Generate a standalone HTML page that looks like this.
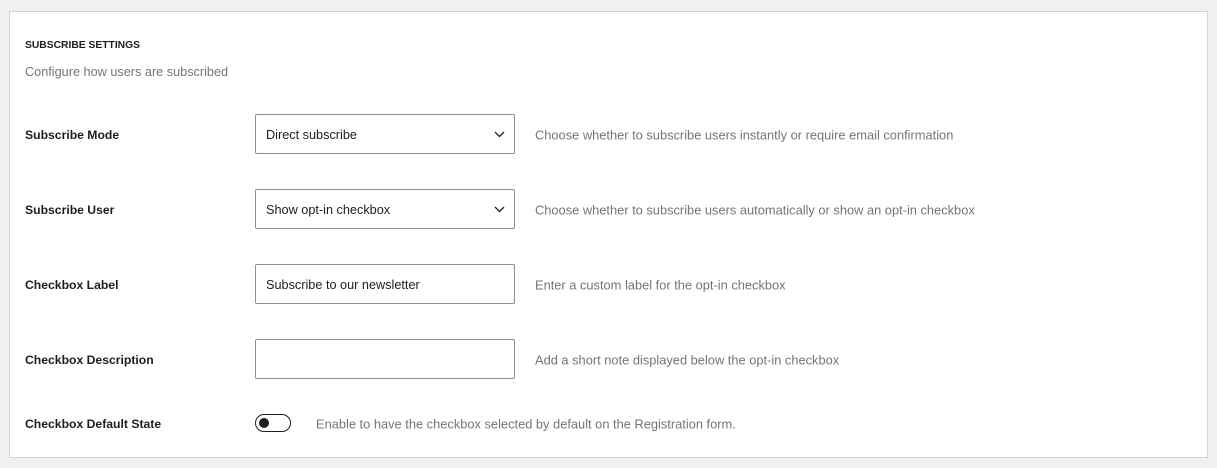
<!DOCTYPE html>
<html><head><style>
body{margin:0;background:#f0f0f0;font-family:"Liberation Sans",sans-serif;width:1217px;height:468px;overflow:hidden}
.card{position:absolute;left:9px;top:11px;width:1199px;height:447px;background:#fff;border:1px solid #d4d4d4;box-sizing:border-box}
.h{position:absolute;left:25px;top:40px;font-size:10.3px;font-weight:bold;color:#1e1e1e}
.sub{position:absolute;left:25px;top:65px;font-size:12.7px;color:#757575}
.lab{position:absolute;left:25px;font-size:12.2px;font-weight:bold;color:#1e1e1e;transform:translateY(-50%);margin-top:1px}
.inp{position:absolute;left:255px;width:260px;height:40px;border:1px solid #8c8f94;border-radius:2px;box-sizing:border-box;font-size:12.7px;color:#1e1e1e;padding-left:10px;line-height:40px;background:#fff}
.inp svg{position:absolute;right:9px;top:16px}
.d{position:absolute;left:535px;font-size:12.85px;color:#757575;transform:translateY(-50%);margin-top:1px}
.tg{position:absolute;left:255px;top:414px;width:36px;height:18px;border:1px solid #1e1e1e;border-radius:9px;box-sizing:border-box}
.tg::after{content:"";position:absolute;left:3px;top:3px;width:10px;height:10px;border-radius:50%;background:#1e1e1e}
</style></head><body>
<div class="card"></div>
<div class="h">SUBSCRIBE SETTINGS</div>
<div class="sub">Configure how users are subscribed</div>

<div class="lab" style="top:134px">Subscribe Mode</div>
<div class="inp" style="top:114px">Direct subscribe<svg width="11" height="7" viewBox="0 0 11 7"><path d="M1 1l4.5 4.5L10 1" fill="none" stroke="#1e1e1e" stroke-width="1.3"/></svg></div>
<div class="d" style="top:134px">Choose whether to subscribe users instantly or require email confirmation</div>

<div class="lab" style="top:209px">Subscribe User</div>
<div class="inp" style="top:189px">Show opt-in checkbox<svg width="11" height="7" viewBox="0 0 11 7"><path d="M1 1l4.5 4.5L10 1" fill="none" stroke="#1e1e1e" stroke-width="1.3"/></svg></div>
<div class="d" style="top:209px">Choose whether to subscribe users automatically or show an opt-in checkbox</div>

<div class="lab" style="top:284px">Checkbox Label</div>
<div class="inp" style="top:264px">Subscribe to our newsletter</div>
<div class="d" style="top:284px">Enter a custom label for the opt-in checkbox</div>

<div class="lab" style="top:359px">Checkbox Description</div>
<div class="inp" style="top:339px"></div>
<div class="d" style="top:359px">Add a short note displayed below the opt-in checkbox</div>

<div class="lab" style="top:423px">Checkbox Default State</div>
<div class="tg"></div>
<div class="d" style="top:423px;left:316px">Enable to have the checkbox selected by default on the Registration form.</div>
</body></html>
